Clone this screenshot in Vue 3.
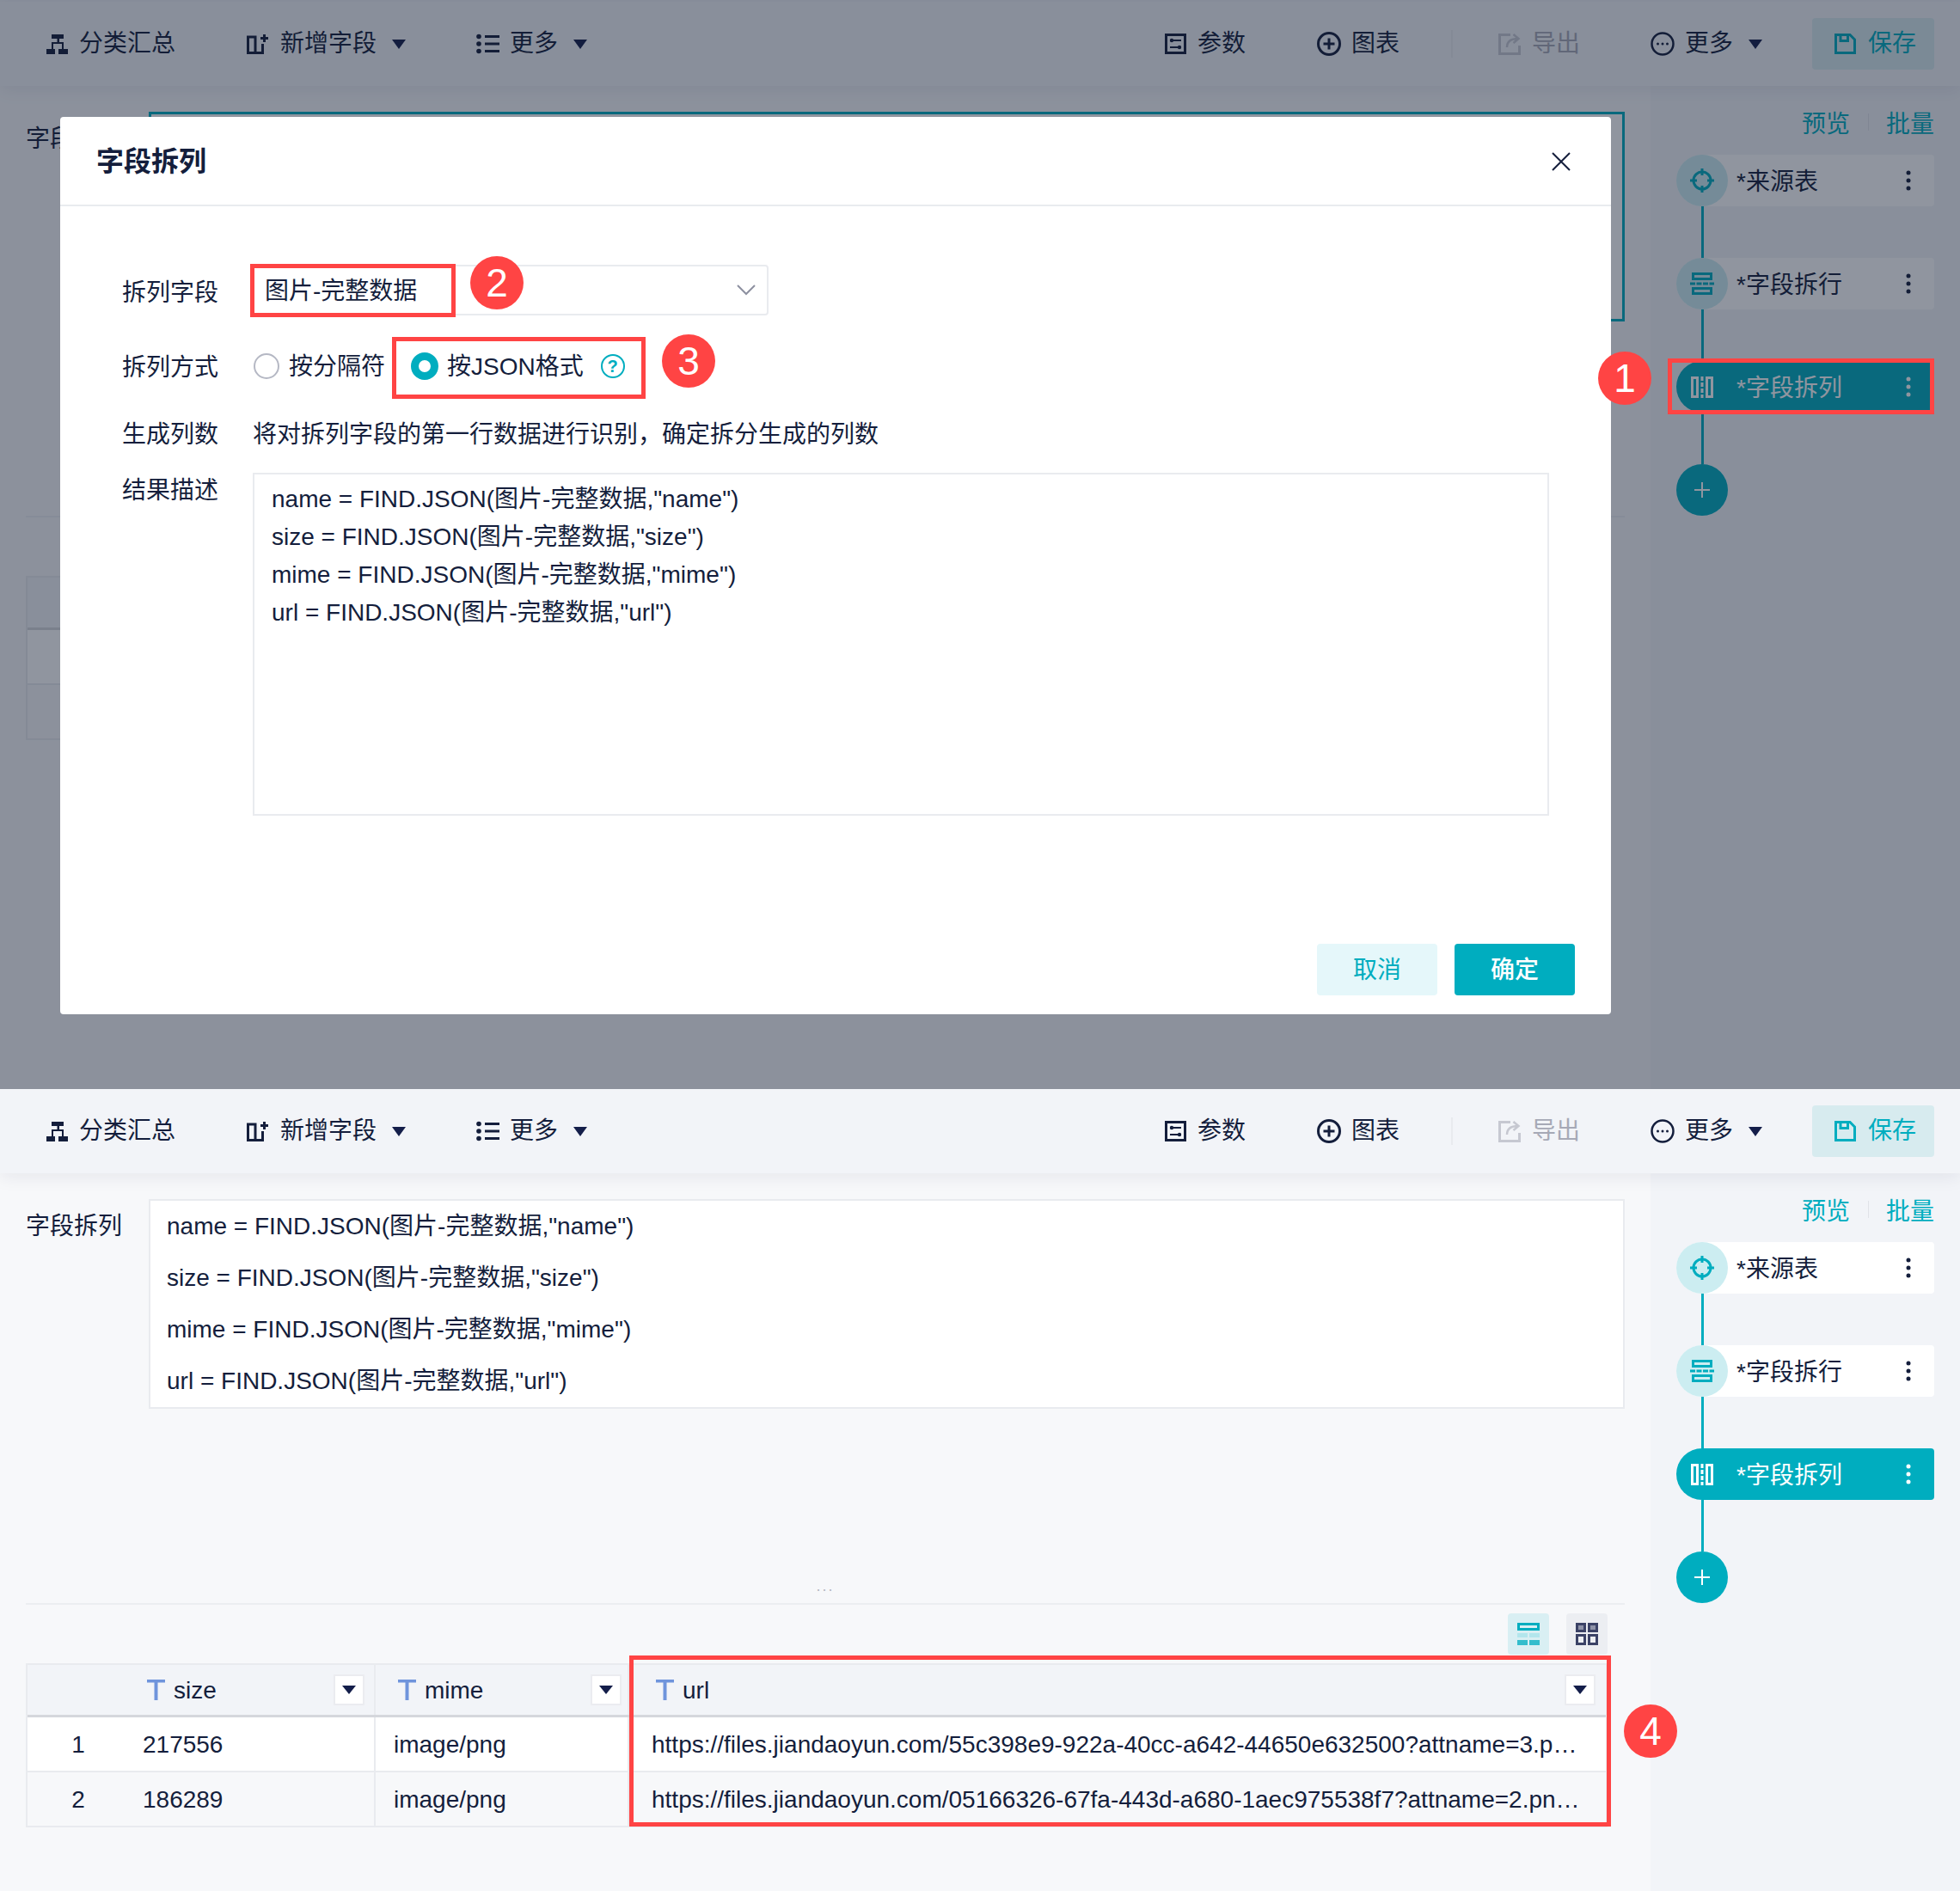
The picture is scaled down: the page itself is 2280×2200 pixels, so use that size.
<script setup>
const fields = ['name', 'size', 'mime', 'url']
const formulas = fields.map((f) => `${f} = FIND.JSON(图片-完整数据,"${f}")`)
const shots = [
  { key: 'dialog', dim: true },
  { key: 'result', dim: false }
]
const nodes = [
  { name: '*来源表', icon: 'source' },
  { name: '*字段拆行', icon: 'rows' },
  { name: '*字段拆列', icon: 'cols', active: true }
]
const rows = [
  { n: 1, size: '217556', mime: 'image/png', url: 'https://files.jiandaoyun.com/55c398e9-922a-40cc-a642-44650e632500?attname=3.png&version=1' },
  { n: 2, size: '186289', mime: 'image/png', url: 'https://files.jiandaoyun.com/05166326-67fa-443d-a680-1aec975538f7?attname=2.png&version=1' }
]
</script>

<template>
  <div class="page">
    <section v-for="shot in shots" :key="shot.key" class="shot" :class="shot.key">
      <header class="toolbar">
        <div class="tb tb-sum">
          <svg width="25" height="23" viewBox="0 0 25 23"><path fill="currentColor" d="M6 0h14v5h-5v4h5v8h5v6H14v-6h4v-6H8v6h2v6H0v-6h6V9h6.500V5H6z"/></svg>
          <span>分类汇总</span>
        </div>
        <div class="tb tb-add">
          <svg width="25" height="23" viewBox="0 0 25 23" fill="none" stroke="currentColor" stroke-width="3"><path d="M1.500 3H10V21.500H1.500zM10 21.500H18.500V11M20.500 0V9M16 4.500H25"/></svg>
          <span>新增字段</span>
          <i class="caret"></i>
        </div>
        <div class="tb tb-list">
          <svg width="27" height="24" viewBox="0 0 27 24" fill="currentColor"><circle cx="3" cy="3.500" r="2.800"/><circle cx="3" cy="12" r="2.800"/><circle cx="3" cy="20.500" r="2.800"/><path d="M10 2h17v3H10zM10 10.500h17v3H10zM10 19h17v3H10z"/></svg>
          <span>更多</span>
          <i class="caret wide"></i>
        </div>

        <div class="tb tb-param">
          <svg width="25" height="24" viewBox="0 0 25 24" fill="none" stroke="currentColor" stroke-width="3"><path d="M1.500 1.500h22v21h-22z"/><path stroke-width="2" d="M6 8h13M6 16h13"/><circle cx="8" cy="8" r="2.200" fill="currentColor" stroke="none"/><circle cx="17" cy="16" r="2.200" fill="currentColor" stroke="none"/></svg>
          <span>参数</span>
        </div>
        <div class="tb tb-chart">
          <svg width="28" height="28" viewBox="0 0 28 28" fill="none" stroke="currentColor" stroke-width="3"><circle cx="14" cy="14" r="12.500"/><path d="M14 7.500v13M7.500 14h13"/></svg>
          <span>图表</span>
        </div>
        <i class="tb-sep"></i>
        <div class="tb tb-export">
          <svg width="26" height="26" viewBox="0 0 26 26" fill="none" stroke="#c6c8d1" stroke-width="3"><path d="M14 2.500H1.500V24.500H24.500V15"/><path stroke-width="2.500" d="M10 17c0-6 4-10 13-10M17.500 2l6 5-6 5"/></svg>
          <span>导出</span>
        </div>
        <div class="tb tb-more">
          <svg width="28" height="28" viewBox="0 0 28 28" fill="none" stroke="currentColor" stroke-width="2.500"><circle cx="14" cy="14" r="12.500"/><g fill="currentColor" stroke="none"><circle cx="8.500" cy="14" r="1.500"/><circle cx="14" cy="14" r="1.500"/><circle cx="19.500" cy="14" r="1.500"/></g></svg>
          <span>更多</span>
          <i class="caret wide"></i>
        </div>
        <button class="save">
          <svg width="25" height="24" viewBox="0 0 25 24" fill="none" stroke="currentColor" stroke-width="3"><path d="M1.500 1.500H18L23.500 7V22.500H1.500z"/><path d="M7 1.500V8.500H15.500V1.500"/></svg>
          <span>保存</span>
        </button>
      </header>

      <div class="body">
        <main class="main">
          <div class="formula-row">
            <label class="formula-label">字段拆列</label>
            <div class="formula" :class="{ focused: shot.dim }">
              <div v-for="line in formulas" :key="line">{{ line }}</div>
            </div>
          </div>
          <div class="dots">...</div>
          <div class="split-line"></div>
          <div class="toggles">
            <button class="toggle on">
              <svg width="26" height="26" viewBox="0 0 26 26"><path fill="none" stroke="#00adbf" stroke-width="3" d="M1.500 1.500h23v6h-23z"/><path fill="#b3e6ec" d="M0 12h12v5H0zM14 12h12v5H14z"/><path fill="#33bdcc" d="M0 20h12v6H0zM14 20h12v6H14z"/></svg>
            </button>
            <button class="toggle">
              <svg width="26" height="26" viewBox="0 0 26 26" fill="none" stroke="#3b4266" stroke-width="3"><path fill="#8f93a8" d="M1.500 1.500h9v8h-9zM15.500 1.500h9v8h-9z"/><path d="M1.500 14.500h9v10h-9zM15.500 14.500h9v10h-9z"/></svg>
            </button>
          </div>
          <div class="table">
            <div class="tr thead">
              <div class="th c1">
                <svg class="t" width="21" height="24" viewBox="0 0 21 24" fill="#6f94dc"><path d="M0 0h21v3.500H12.500v20.500H8.500V3.500H0z"/></svg>
                <span>size</span>
                <button class="filter"><i class="caret"></i></button>
              </div>
              <div class="th c2">
                <svg class="t" width="21" height="24" viewBox="0 0 21 24" fill="#6f94dc"><path d="M0 0h21v3.500H12.500v20.500H8.500V3.500H0z"/></svg>
                <span>mime</span>
                <button class="filter"><i class="caret"></i></button>
              </div>
              <div class="th c3">
                <svg class="t" width="21" height="24" viewBox="0 0 21 24" fill="#6f94dc"><path d="M0 0h21v3.500H12.500v20.500H8.500V3.500H0z"/></svg>
                <span>url</span>
                <button class="filter"><i class="caret"></i></button>
              </div>
            </div>
            <div v-for="r in rows" :key="r.n" class="tr tbody">
              <div class="td c1"><span class="idx">{{ r.n }}</span><span>{{ r.size }}</span></div>
              <div class="td c2">{{ r.mime }}</div>
              <div class="td c3"><span class="url">{{ r.url }}</span></div>
            </div>
          </div>
        </main>

        <aside class="side">
          <div class="side-links">
            <a>预览</a>
            <i></i>
            <a>批量</a>
          </div>
          <template v-for="node in nodes" :key="node.name">
            <div class="node" :class="{ active: node.active }">
              <span class="bubble">
                <svg v-if="node.icon === 'source'" width="28" height="28" viewBox="0 0 28 28" fill="none" stroke="currentColor" stroke-width="3"><circle cx="14" cy="14" r="10"/><path d="M14 0v8M14 20v8M0 14h8M20 14h8"/></svg>
                <svg v-else-if="node.icon === 'rows'" width="28" height="26" viewBox="0 0 28 26" fill="none" stroke="currentColor" stroke-width="3"><path d="M3.500 1.500h21v6h-21zM3.500 18.500h21v6h-21z"/><path stroke-dasharray="6 1.500" d="M0 13h28"/></svg>
                <svg v-else width="26" height="25" viewBox="0 0 26 25" fill="none" stroke="currentColor" stroke-width="3"><path d="M1.500 1.500h6v22h-6zM18.500 1.500h6v22h-6z"/><path stroke-dasharray="5 2" d="M13 0v25"/></svg>
              </span>
              <span class="node-name">{{ node.name }}</span>
              <svg class="kebab" width="6" height="24" viewBox="0 0 6 24" fill="currentColor"><circle cx="3" cy="3" r="2.500"/><circle cx="3" cy="12" r="2.500"/><circle cx="3" cy="21" r="2.500"/></svg>
            </div>
            <i class="link"></i>
          </template>
          <div class="add">
            <svg width="18" height="18" viewBox="0 0 18 18" stroke="#fff" stroke-width="2"><path d="M9 0v18M0 9h18"/></svg>
          </div>
        </aside>
      </div>

      <template v-if="shot.dim">
        <div class="mask"></div>
        <div class="modal">
          <div class="modal-head">
            <h2>字段拆列</h2>
            <svg width="22" height="22" viewBox="0 0 22 22" stroke="#141e3c" stroke-width="2"><path d="M1 1l20 20M21 1L1 21"/></svg>
          </div>
          <div class="form">
            <div class="form-row row-select">
              <label>拆列字段</label>
              <div class="select">
                <span>图片-完整数据</span>
                <svg width="22" height="13" viewBox="0 0 22 13" fill="none" stroke="#8d90a0" stroke-width="2"><path d="M1 1l10 10L21 1"/></svg>
              </div>
            </div>
            <div class="form-row row-radio">
              <label>拆列方式</label>
              <i class="radio"></i>
              <span class="radio-text">按分隔符</span>
              <i class="radio checked"></i>
              <span class="radio-text">按JSON格式</span>
              <span class="help">?</span>
            </div>
            <div class="form-row row-count">
              <label>生成列数</label>
              <span>将对拆列字段的第一行数据进行识别，确定拆分生成的列数</span>
            </div>
            <div class="form-row row-desc">
              <label>结果描述</label>
              <div class="desc">
                <div v-for="line in formulas" :key="line">{{ line }}</div>
              </div>
            </div>
          </div>
          <div class="modal-foot">
            <button class="btn ghost">取消</button>
            <button class="btn primary">确定</button>
          </div>
        </div>
        <i class="redbox box-node"></i>
        <i class="redbox box-field"></i>
        <i class="redbox box-json"></i>
        <b class="badge badge-1">1</b>
        <b class="badge badge-2">2</b>
        <b class="badge badge-3">3</b>
      </template>
      <template v-else>
        <i class="redbox box-url"></i>
        <b class="badge badge-4">4</b>
      </template>
    </section>
  </div>
</template>

<style scoped>
.page {
  width: 2280px;
  height: 2200px;
  display: flex;
  flex-direction: column;
  font-family: "Liberation Sans", "Noto Sans CJK SC", sans-serif;
  font-size: 28px;
  line-height: 40px;
  color: #141e3c;
  background: #f7f8fa;
}
.shot {
  position: relative;
  overflow: hidden;
  display: flex;
  flex-direction: column;
  box-sizing: border-box;
}
.shot.dialog { height: 1267px; padding-top: 2px; background: #f2f4f8; }
.shot.result { height: 933px; }
button {
  font: inherit;
  border: 0;
  padding: 0;
  background: none;
  color: inherit;
}
i, b { display: block; font-style: normal; }

/* toolbar */
.toolbar {
  position: relative;
  z-index: 1;
  flex: none;
  height: 98px;
  display: flex;
  align-items: center;
  padding: 0 30px 0 54px;
  background: #f2f4f8;
  box-shadow: 0 4px 20px rgba(20, 30, 60, 0.08);
}
.tb { display: flex; align-items: center; gap: 13px; }
.tb svg { flex: none; }
.tb-add { margin-left: 83px; gap: 14px; }
.tb-list { margin-left: 82px; gap: 12px; }
.tb-param { margin-left: auto; gap: 13px; }
.tb-chart { margin-left: 83px; gap: 12px; }
.tb-sep { width: 2px; height: 32px; margin: 0 53px 0 60px; background: #e8eaee; }
.tb-export { color: #a6a9b6; }
.tb-more { margin-left: 82px; gap: 12px; }
.caret {
  width: 0;
  height: 0;
  margin-left: 4px;
  border-style: solid;
  border-width: 11px 8px 0;
  border-color: #141e4a transparent transparent;
}
.caret.wide { margin-left: 6px; }
.save {
  width: 142px;
  height: 60px;
  margin-left: 58px;
  display: flex;
  align-items: center;
  gap: 14px;
  padding-left: 26px;
  border-radius: 4px;
  background: #d7ebef;
  color: #00adbf;
}

/* content */
.body { flex: 1; display: flex; min-height: 0; background: #f7f8fa; }
.main {
  width: 1920px;
  flex: none;
  padding: 30px 30px 0;
  box-sizing: border-box;
}
.formula-row { display: flex; }
.formula-label { width: 143px; flex: none; padding-top: 12px; }
.formula {
  flex: 1;
  height: 244px;
  box-sizing: border-box;
  padding: 0 19px;
  border: 2px solid #e9ebef;
  background: #fff;
  line-height: 60px;
  white-space: nowrap;
}
.formula.focused { border: 3px solid #00adbf; padding: 0 18px; }
.dots {
  margin-top: 199px;
  height: 14px;
  margin-bottom: 13px;
  font-size: 18px;
  letter-spacing: 2px;
  line-height: 14px;
  text-align: center;
  color: #b5b8c2;
}
.split-line { height: 2px; background: #eceef1; }
.toggles {
  display: flex;
  justify-content: flex-end;
  gap: 20px;
  margin: 10px 20px 10px 0;
}
.toggle {
  width: 48px;
  height: 48px;
  border-radius: 4px;
  background: #eceef2;
  display: flex;
  align-items: center;
  justify-content: center;
}
.toggle.on { background: #d9eff3; }

.table {
  width: 1840px;
  box-sizing: border-box;
  border: 2px solid #e9ebef;
}
.tr { display: grid; grid-template-columns: 405px 295px 1136px; }
.thead { height: 61px; background: #f2f4f8; border-bottom: 3px solid #d5d7dc; box-sizing: border-box; }
.tbody { height: 64px; box-sizing: border-box; background: #fff; border-bottom: 2px solid #e9ebef; }
.tbody:last-child { height: 62px; background: #f7f8fa; border-bottom: 0; }
.th, .td { display: flex; align-items: center; min-width: 0; box-sizing: border-box; }
.td { padding-top: 2px; }
.th { gap: 10px; }
.th span { padding-top: 1px; }
.c1, .c2 { border-right: 2px solid #e9ebef; }
.th.c1 { padding: 0 11px 0 139px; }
.th.c2 { padding: 0 7px 0 26px; }
.th.c3 { padding: 0 12px 0 31px; }
.td.c2 { padding-left: 21px; }
.td.c3 { padding: 2px 28px 0 26px; }
.t { flex: none; }
.filter {
  width: 36px;
  height: 36px;
  margin-left: auto;
  box-sizing: border-box;
  border: 2px solid #ebecf0;
  background: #fff;
  display: flex;
  align-items: center;
  justify-content: center;
}
.filter .caret { margin: 0; border-width: 10px 8px 0; }
.idx { width: 118px; text-align: center; margin-right: 16px; }
.url { overflow: hidden; text-overflow: ellipsis; white-space: nowrap; }

/* side panel */
.side {
  flex: 1;
  padding: 22px 30px 0;
  background: #f2f4f8;
}
.side-links {
  height: 40px;
  margin-bottom: 18px;
  display: flex;
  align-items: center;
  justify-content: flex-end;
  color: #00adbf;
}
.side-links a { padding-top: 5px; }
.side-links i { width: 1px; height: 20px; margin: 0 20px 0 21px; background: #e0e3e8; }
.node {
  height: 60px;
  display: flex;
  align-items: center;
  border-radius: 30px 4px 4px 30px;
  background: #fff;
}
.bubble {
  flex: none;
  width: 60px;
  height: 60px;
  border-radius: 50%;
  background: #ccedf1;
  color: #00adbf;
  display: flex;
  align-items: center;
  justify-content: center;
}
.node-name { margin-left: 10px; flex: 1; padding-top: 3px; }
.kebab { margin-right: 27px; }
.node.active { background: #00adbf; color: #fff; }
.node.active .bubble { background: none; color: #fff; }
.link { width: 3px; height: 60px; margin-left: 28.5px; background: #00adbf; }
.add {
  width: 60px;
  height: 60px;
  border-radius: 50%;
  background: #00adbf;
  display: flex;
  align-items: center;
  justify-content: center;
}

/* dialog */
.mask {
  position: absolute;
  inset: 0;
  z-index: 2;
  background: rgba(20, 30, 50, 0.47);
}
.modal {
  position: absolute;
  z-index: 3;
  left: 70px;
  top: 136px;
  width: 1804px;
  height: 1044px;
  display: flex;
  flex-direction: column;
  background: #fff;
  border-radius: 4px;
}
.modal-head {
  height: 104px;
  flex: none;
  box-sizing: border-box;
  display: flex;
  align-items: center;
  justify-content: space-between;
  padding: 2px 47px 0 42px;
  border-bottom: 2px solid #e9ebef;
}
.modal-head h2 {
  margin: 0;
  font-size: 32px;
  font-weight: 700;
  line-height: 40px;
}
.form { padding: 68px 0 0 72px; }
.form-row { display: flex; align-items: center; }
.form-row label { width: 152px; flex: none; padding-top: 4px; }
.row-select { height: 59px; }
.row-select label { padding-top: 7px; }
.select {
  width: 600px;
  height: 59px;
  box-sizing: border-box;
  border: 2px solid #e9ebef;
  border-radius: 4px;
  display: flex;
  align-items: center;
  justify-content: space-between;
  padding: 0 13px 0 12px;
}
.select span { padding-top: 2px; }
.row-radio { height: 60px; margin-top: 29px; }
.radio-text { padding-top: 2px; }
.radio {
  flex: none;
  width: 30px;
  height: 30px;
  margin: 0 11px 0 1px;
  box-sizing: border-box;
  border: 2px solid #b5b8c4;
  border-radius: 50%;
}
.radio.checked {
  width: 32px;
  height: 32px;
  margin: 0 10px 0 30px;
  border: 9px solid #00adbf;
}
.help {
  width: 28px;
  height: 28px;
  margin-left: 20px;
  box-sizing: border-box;
  border: 2px solid #00adbf;
  border-radius: 50%;
  color: #00adbf;
  font-size: 20px;
  font-weight: 700;
  line-height: 24px;
  text-align: center;
}
.row-count { height: 40px; margin-top: 28px; }
.row-count span { padding-top: 3px; }
.row-desc { align-items: flex-start; margin-top: 26px; }
.row-desc label { line-height: 40px; padding-top: 1px; }
.desc {
  width: 1508px;
  height: 399px;
  box-sizing: border-box;
  border: 2px solid #e9ebef;
  padding: 7px 20px;
  line-height: 44px;
}
.modal-foot {
  margin-top: auto;
  display: flex;
  justify-content: flex-end;
  gap: 20px;
  padding: 0 42px 22px 0;
}
.btn { width: 140px; height: 60px; border-radius: 4px; padding-top: 2px; }
.btn.ghost { background: #e5f7fa; color: #00adbf; }
.btn.primary { background: #00adbf; color: #fff; font-weight: 500; }

/* annotations */
.redbox {
  position: absolute;
  z-index: 4;
  box-sizing: border-box;
  border: 5px solid #ff4444;
}
.box-node { left: 1940px; top: 417px; width: 310px; height: 65px; }
.box-field { left: 291px; top: 307px; width: 239px; height: 62px; }
.box-json { left: 456px; top: 392px; width: 295px; height: 72px; }
.box-url { left: 732px; top: 659px; width: 1142px; height: 199px; }
.badge {
  position: absolute;
  z-index: 5;
  width: 62px;
  height: 62px;
  border-radius: 50%;
  background: #ff4444;
  color: #fff;
  font-family: "Liberation Sans", sans-serif;
  font-size: 46px;
  font-weight: 400;
  line-height: 62px;
  text-align: center;
}
.badge-1 { left: 1859px; top: 409px; }
.badge-2 { left: 547px; top: 298px; }
.badge-3 { left: 770px; top: 389px; }
.badge-4 { left: 1889px; top: 716px; }
</style>
